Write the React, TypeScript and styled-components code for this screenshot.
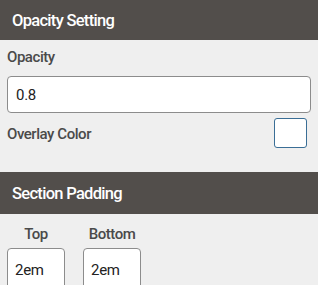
import React from "react";
import styled, { createGlobalStyle } from "styled-components";

const Global = createGlobalStyle`
  html, body { margin: 0; padding: 0; background: #efefef; }
  body { font-family: Roboto, "Liberation Sans", sans-serif; }
  * { box-sizing: border-box; }
`;

const Panel = styled.div`
  width: 318px;
  height: 285px;
  overflow: hidden;
  background: #efefef;
`;

const Header = styled.div<{ $h: number }>`
  height: ${(p) => p.$h}px;
  background: #524e4b;
  color: #ffffff;
  font-size: 16.5px;
  font-weight: 500;
  display: flex;
  align-items: center;
  padding-left: 12px;
  letter-spacing: -0.7px;
`;

const Body = styled.div`
  padding: 7px 7px 0 7px;
  display: flex;
  flex-direction: column;
`;

const Label = styled.div`
  color: #4a4a4a;
  font-size: 15px;
  font-weight: 500;
  line-height: 20px;
  letter-spacing: -0.45px;
`;

const TextInput = styled.div`
  margin-top: 9px;
  height: 37px;
  background: #fff;
  border: 1px solid #8c8c8c;
  border-radius: 4px;
  display: flex;
  align-items: center;
  padding-left: 8px;
  font-size: 15px;
  color: #222;
  letter-spacing: -0.3px;
`;

const ColorRow = styled.div`
  display: flex;
  justify-content: space-between;
  align-items: flex-start;
  margin-top: 5px;
  padding-right: 4px;
  height: 54px;
  & > ${Label} {
    margin-top: 6px;
  }
`;

const Swatch = styled.div`
  width: 33px;
  height: 30px;
  background: #fff;
  border: 1.5px solid #3a6e96;
  border-radius: 3px;
`;

const PadRow = styled.div`
  display: flex;
  gap: 18px;
  padding-top: 3px;
`;

const PadCol = styled.div`
  width: 58px;
  display: flex;
  flex-direction: column;
  align-items: center;
`;

const SmallInput = styled.div`
  margin-top: 4px;
  width: 58px;
  height: 44px;
  background: #fff;
  border: 1px solid #8c8c8c;
  border-radius: 4px;
  padding: 11px 0 0 7px;
  line-height: 20px;
  font-size: 15px;
  color: #222;
  letter-spacing: -0.3px;
  align-self: stretch;
`;

export default function App() {
  return (
    <Panel>
      <Global />
      <Header $h={40}>Opacity Setting</Header>
      <Body>
        <Label>Opacity</Label>
        <TextInput>0.8</TextInput>
        <ColorRow>
          <Label>Overlay Color</Label>
          <Swatch />
        </ColorRow>
      </Body>
      <Header $h={42}>Section Padding</Header>
      <Body>
        <PadRow>
          <PadCol>
            <Label>Top</Label>
            <SmallInput>2em</SmallInput>
          </PadCol>
          <PadCol>
            <Label>Bottom</Label>
            <SmallInput>2em</SmallInput>
          </PadCol>
        </PadRow>
      </Body>
    </Panel>
  );
}
